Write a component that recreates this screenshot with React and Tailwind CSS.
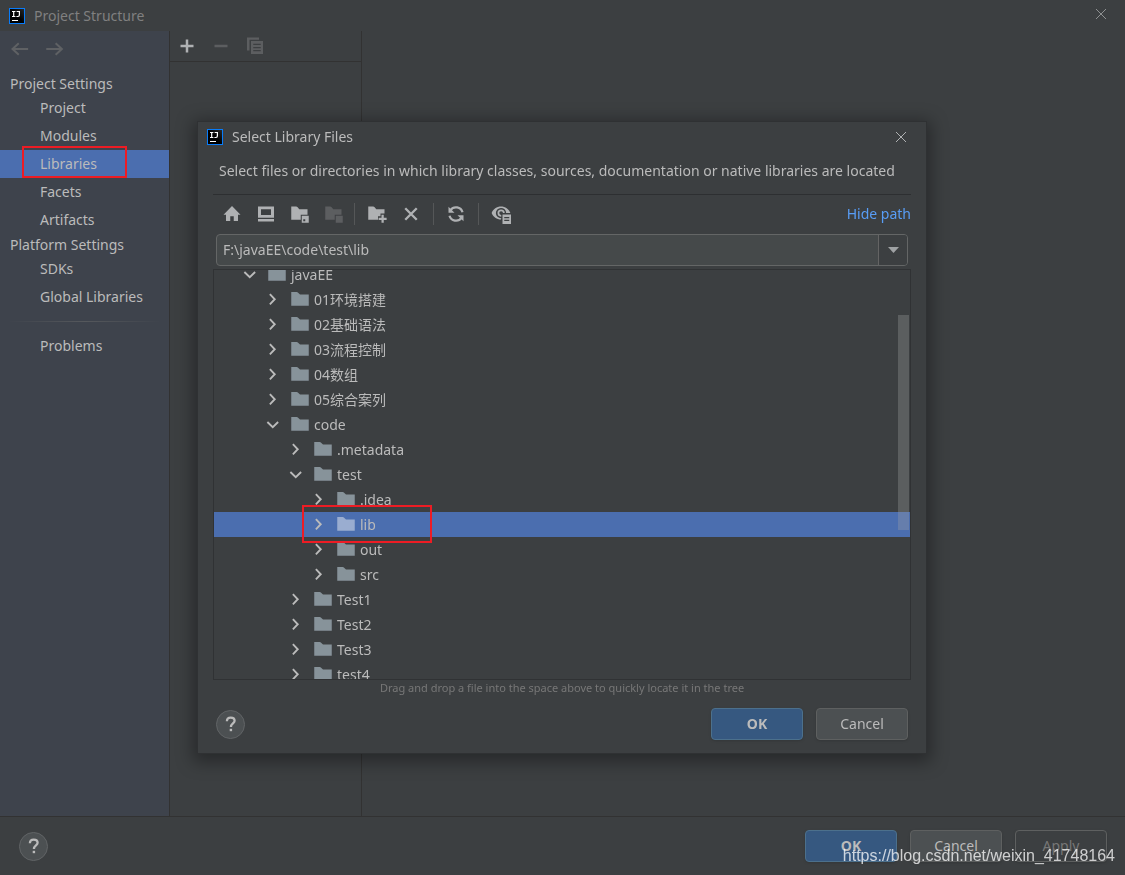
import React from "react";

function IdeaLogo() {
  return (
    <svg className="size-4 shrink-0" viewBox="0 0 16 16" aria-hidden="true">
      <defs>
        <linearGradient id="ideaFill" x1="1" y1="0" x2="0" y2="1">
          <stop offset="0" stopColor="#2c2c2c" />
          <stop offset="0.5" stopColor="#000" />
        </linearGradient>
      </defs>
      <rect x="0.5" y="0.5" width="15" height="15" fill="url(#ideaFill)" stroke="#087cfa" />
      <path d="M3 3.5h3.4M4.7 3.5v5M3 8.5h3.4M7.6 3.5h2.800v3.600q0 1.400-1.400 1.400H7.400" fill="none" stroke="#fff" strokeWidth="1.200" />
      <rect x="3" y="12" width="6" height="1" fill="#fff" />
    </svg>
  );
}

function CloseIcon({ className }) {
  return (
    <svg className={className} viewBox="0 0 10 10" aria-hidden="true">
      <path d="M0 0L10 10M10 0L0 10" stroke="currentColor" strokeWidth="1" />
    </svg>
  );
}

function Icon({ children, className = "" }) {
  return (
    <svg className={`size-5 shrink-0 ${className}`} viewBox="0 0 16 16" fill="currentColor" aria-hidden="true">
      {children}
    </svg>
  );
}

const folderPath = "M1 12.600h14V3.600H8L6.700 2.300C6.300 1.900 5.500 1.600 5 1.600H1z";
const smallFolder = "M1 12.5h7.6V8.6H14V4.2H7.4L6.1 2.6C5.8 2.2 5.3 2 4.9 2H1z";

const toolIcons = {
  home: <path d="M8 1.6L14.8 8.6H12.8V13.6H9.4V9.8H6.6V13.6H3.2V8.6H1.2z" />,
  desktop: <path fillRule="evenodd" d="M1.6 2H14.4V11H1.6zM4 4.2V8.8H12V4.2zM1.6 12H14.4V14H1.6z" />,
  project: (
    <>
      <path d={smallFolder} />
      <path fillRule="evenodd" d="M9.4 9.4H15V15H9.4zM10.6 12.2V13.8H12.2V12.2z" />
    </>
  ),
  module: (
    <>
      <path d={smallFolder} />
      <path d="M9.4 9.4H15V15H9.4z" />
    </>
  ),
  newFolder: (
    <>
      <path d="M1 12.5h7.8V9.8h2V7.6h3.200V4.2H7.4L6.1 2.6C5.8 2.2 5.3 2 4.9 2H1z" />
      <path d="M11.6 8.6h1.8v2.3h2.3v1.8h-2.3v2.3h-1.8v-2.3H9.3v-1.8h2.3z" />
    </>
  ),
  remove: <path d="M3.4 3.4L12.6 12.6M12.6 3.4L3.4 12.6" fill="none" stroke="currentColor" strokeWidth="1.900" />,
  refresh: (
    <>
      <path d="M13.200 6.600A5.4 5.4 0 0 0 3.6 4.900M2.800 9.400A5.4 5.4 0 0 0 12.4 11.100" fill="none" stroke="currentColor" strokeWidth="1.800" />
      <path d="M2 2.2V7H6.8zM14 13.8V9H9.2z" />
    </>
  ),
  hidden: (
    <>
      <path fillRule="evenodd" d="M8 12.400C4.600 12.400 1.800 10.400 0.500 7.200C1.800 4 4.600 2 8 2C11.400 2 14.200 4 15.500 7.200H12.100A4.100 4.100 0 1 0 8.200 11.300zM8.200 10.100A2.900 2.900 0 1 1 11 7.200H9.600A1.500 1.500 0 1 0 8.200 8.700z" />
      <path fillRule="evenodd" d="M9.200 8.400H16V16H9.200zM10.600 10.300V11.300H14.600V10.300zM10.600 12.500V13.500H14.600V12.500z" />
    </>
  ),
};

function ToolButton({ name, label, disabled }) {
  return (
    <button type="button" aria-label={label} disabled={disabled} className="text-[#afb1b3] disabled:text-[#5c5e60]">
      <Icon>{toolIcons[name]}</Icon>
    </button>
  );
}

function Divider() {
  return <span className="h-[22px] w-px bg-[#555758]" />;
}

function HelpButton() {
  return (
    <button type="button" aria-label="Help" className="flex size-[29px] items-center justify-center rounded-full border border-[#616466] bg-[#4c5052] text-[#bbbbbb]">
      <svg className="h-4 w-3" viewBox="0 0 12 16" aria-hidden="true">
        <path d="M1.900 5.200C1.900 2.900 3.400 1.600 5.700 1.600S9.600 2.900 9.600 4.800C9.600 7.300 5.900 7.400 5.900 10.900" fill="none" stroke="currentColor" strokeWidth="2.300" />
        <rect x="4.700" y="12.800" width="2.400" height="2.400" fill="currentColor" />
      </svg>
    </button>
  );
}

function DialogButton({ kind = "plain", children }) {
  const styles = {
    primary: "border-[#4c708c] bg-[#365880] font-bold",
    plain: "border-[#5e6060] bg-[#4c5052]",
    disabled: "border-[#5e6060] text-[#777777]",
  };
  return (
    <button type="button" disabled={kind === "disabled"} className={`h-8 w-[92px] rounded border text-center shadow-sm ${styles[kind]}`}>
      {children}
    </button>
  );
}

function NavItem({ children, selected }) {
  return (
    <li className={`relative ${selected ? "bg-[#4b6eaf]" : ""}`}>
      <a href="#" aria-current={selected ? "page" : undefined} className="block h-7 pl-10 leading-7">
        {children}
      </a>
      {selected && <span className="pointer-events-none absolute -top-1 bottom-0 left-[22px] w-[105px] border-2 border-[#ed1c24]" />}
    </li>
  );
}

const projectItems = ["Project", "Modules", "Libraries", "Facets", "Artifacts"];
const platformItems = ["SDKs", "Global Libraries"];

function Sidebar() {
  return (
    <nav className="flex w-[170px] shrink-0 flex-col border-r border-[#323232] bg-[#3e434c]">
      <div className="flex h-[42px] gap-[15px] pt-2 pl-2.5 text-[#5f6164]">
        <button type="button" aria-label="Back" disabled className="h-5">
          <Icon><path d="M14.500 8H2.500M7 3.400L2 8L7 12.600" fill="none" stroke="currentColor" strokeWidth="1.600" /></Icon>
        </button>
        <button type="button" aria-label="Forward" disabled className="h-5">
          <Icon><path d="M1 8H13M8.500 3.400L13.500 8L8.500 12.600" fill="none" stroke="currentColor" strokeWidth="1.600" /></Icon>
        </button>
      </div>
      <h2 className="pl-2.5 leading-[21px]">Project Settings</h2>
      <ul>
        {projectItems.map((item) => (
          <NavItem key={item} selected={item === "Libraries"}>{item}</NavItem>
        ))}
      </ul>
      <h2 className="pl-2.5 leading-[21px]">Platform Settings</h2>
      <ul>
        {platformItems.map((item) => (
          <NavItem key={item}>{item}</NavItem>
        ))}
      </ul>
      <div className="mx-2 my-2.5 h-px bg-linear-to-r from-transparent via-[#55585c] to-transparent" />
      <ul>
        <NavItem>Problems</NavItem>
      </ul>
    </nav>
  );
}

const treeRows = [
  { level: 0, name: "javaEE", open: true },
  { level: 1, name: "01环境搭建" },
  { level: 1, name: "02基础语法" },
  { level: 1, name: "03流程控制" },
  { level: 1, name: "04数组" },
  { level: 1, name: "05综合案列" },
  { level: 1, name: "code", open: true },
  { level: 2, name: ".metadata" },
  { level: 2, name: "test", open: true },
  { level: 3, name: ".idea" },
  { level: 3, name: "lib", selected: true },
  { level: 3, name: "out" },
  { level: 3, name: "src" },
  { level: 2, name: "Test1" },
  { level: 2, name: "Test2" },
  { level: 2, name: "Test3" },
  { level: 2, name: "test4" },
];

const indents = ["pl-[25px]", "pl-[48px]", "pl-[71px]", "pl-[94px]"];

function TreeRow({ level, name, open, selected }) {
  return (
    <li
      role="treeitem"
      aria-expanded={!!open}
      aria-selected={!!selected}
      className={`relative flex h-[25px] items-center ${indents[level]} ${selected ? "z-10 bg-[#4b6eaf]" : ""}`}
    >
      <Icon>
        <path d={open ? "M4.300 5.600L8.600 9.700L12.900 5.600" : "M6.300 3.300L10.200 7.400L6.300 11.500"} fill="none" stroke="#bbbbbb" strokeWidth="1.500" />
      </Icon>
      <Icon className={`mr-1 ml-2 ${selected ? "text-[#9aadd0]" : "text-[#87939a]"}`}>
        <path d={folderPath} />
      </Icon>
      <span>{name}</span>
      {selected && <span className="pointer-events-none absolute -top-[7px] left-[88px] h-[38px] w-[130px] border-2 border-[#ed1c24]" />}
    </li>
  );
}

function LibraryDialog() {
  return (
    <div className="fixed inset-0 flex items-center justify-center pr-px">
      <section
        role="dialog"
        aria-labelledby="dialog-title"
        className="flex w-[730px] flex-col border border-[#2f3133] bg-[#3c3f41] shadow-[0_4px_16px_4px_rgba(0,0,0,0.35)]"
      >
        <header className="flex h-[30px] items-center pr-5 pl-[9px]">
          <IdeaLogo />
          <h1 id="dialog-title" className="ml-[9px] flex-1">Select Library Files</h1>
          <button type="button" aria-label="Close" className="text-[#b0b2b3]">
            <CloseIcon className="size-2.5" />
          </button>
        </header>
        <p className="pb-1 pl-[21px] leading-[38px] whitespace-nowrap">
          Select files or directories in which library classes, sources, documentation or native libraries are located
        </p>
        <div className="mx-[15px] flex h-10 items-center border-t border-[#2d2f31] pb-0.5 pl-[9px]">
          <div className="flex items-center gap-[14px]">
            <ToolButton name="home" label="Home" />
            <ToolButton name="desktop" label="Desktop" />
            <ToolButton name="project" label="Project directory" />
            <ToolButton name="module" label="Module directory" disabled />
          </div>
          <span className="w-2.5" />
          <Divider />
          <div className="flex items-center gap-[14px] px-3">
            <ToolButton name="newFolder" label="New folder" />
            <ToolButton name="remove" label="Delete" />
          </div>
          <Divider />
          <div className="flex px-3">
            <ToolButton name="refresh" label="Refresh" />
          </div>
          <Divider />
          <div className="flex px-3">
            <ToolButton name="hidden" label="Show hidden files" />
          </div>
          <a href="#" className="ml-auto text-[#589df6]">Hide path</a>
        </div>
        <div className="mr-[18px] ml-[18px] flex h-8 overflow-hidden rounded border border-[#646666] bg-[#45494a]">
          <input aria-label="Path" defaultValue="F:\javaEE\code\test\lib" className="min-w-0 flex-1 px-1.5 outline-none" />
          <button type="button" aria-label="Recent paths" className="flex w-[29px] items-center justify-center border-l border-[#646464] bg-[#3c3f41]">
            <svg className="h-1.5 w-[11px]" viewBox="0 0 11 6" aria-hidden="true">
              <path d="M0 0H11L5.500 6z" fill="#9fa2a4" />
            </svg>
          </button>
        </div>
        <div className="relative mx-[15px] mt-[3px] h-[411px] overflow-hidden border border-[#303234]">
          <ul role="tree" className="-mt-2">
            {treeRows.map((row) => (
              <TreeRow key={row.name} {...row} />
            ))}
          </ul>
          <span className="absolute top-[45px] right-px z-20 h-[215px] w-[11px] bg-[#a6a6a6]/30" />
        </div>
        <p className="text-center text-[11px] leading-4 text-[#777777]">
          Drag and drop a file into the space above to quickly locate it in the tree
        </p>
        <footer className="flex items-center gap-[13px] px-[18px] pt-3 pb-[13px]">
          <HelpButton />
          <span className="flex-1" />
          <DialogButton kind="primary">OK</DialogButton>
          <DialogButton>Cancel</DialogButton>
        </footer>
      </section>
    </div>
  );
}

export default function App() {
  return (
    <div className="relative flex min-h-screen flex-col overflow-hidden bg-[#3c3f41] font-['Noto_Sans','Noto_Sans_CJK_SC',sans-serif] text-[14px] leading-5 text-[#bbbbbb]">
      <header className="flex h-[31px] items-center pr-[19px] pl-[9px] text-[#808080]">
        <IdeaLogo />
        <h1 className="ml-[9px] flex-1">Project Structure</h1>
        <button type="button" aria-label="Close window" className="pb-1 text-[#8f9192]">
          <CloseIcon className="size-2.5" />
        </button>
      </header>
      <main className="flex flex-1">
        <Sidebar />
        <section className="w-48 shrink-0 border-r border-[#323232]">
          <div className="flex h-[31px] items-center gap-[14px] border-b border-[#323232] pl-[7px]">
            <button type="button" aria-label="Add" className="text-[#afb1b3]">
              <Icon><path d="M8 2.800V13.200M2.800 8H13.200" stroke="currentColor" strokeWidth="2" /></Icon>
            </button>
            <button type="button" aria-label="Remove" disabled className="text-[#5c5e60]">
              <Icon><path d="M2.800 8H13.200" stroke="currentColor" strokeWidth="2" /></Icon>
            </button>
            <button type="button" aria-label="Copy" disabled className="text-[#5c5e60]">
              <Icon>
                <path d="M1.600 1.200H11.200V3H3.600V11.600H1.600z" />
                <path fillRule="evenodd" d="M4.800 4H14.400V14.400H4.800zM6.600 6.200V7.200H12.600V6.200zM6.600 8.700V9.700H12.600V8.700zM6.600 11.200V12.200H12.600V11.200z" />
              </Icon>
            </button>
          </div>
        </section>
        <section className="flex-1" />
      </main>
      <footer className="flex h-[59px] items-center gap-[13px] border-t border-[#323232] pr-[18px] pl-[19px]">
        <HelpButton />
        <span className="flex-1" />
        <DialogButton kind="primary">OK</DialogButton>
        <DialogButton>Cancel</DialogButton>
        <DialogButton kind="disabled">Apply</DialogButton>
      </footer>
      <LibraryDialog />
      <p className="pointer-events-none absolute right-2.5 bottom-[7px] font-['Liberation_Sans',sans-serif] text-[16px] leading-6 text-white/75">
        https://blog.csdn.net/weixin_41748164
      </p>
    </div>
  );
}
